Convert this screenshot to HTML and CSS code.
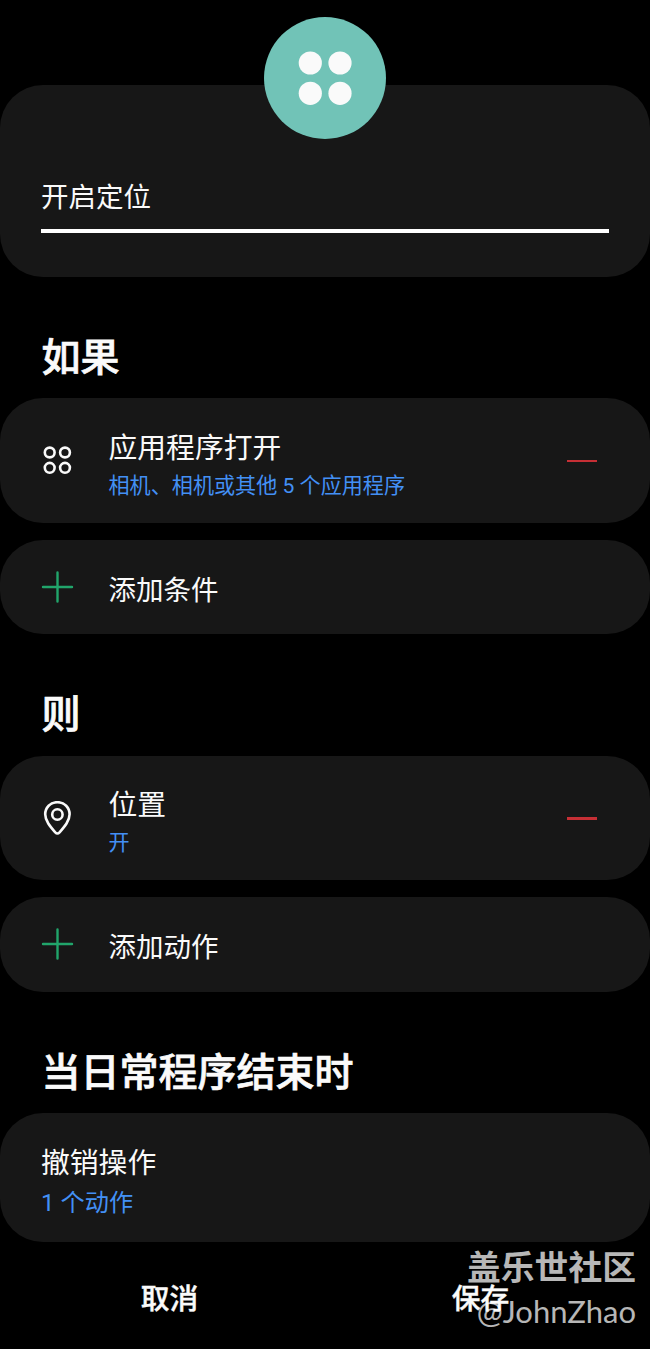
FILE: index.html
```html
<!DOCTYPE html>
<html lang="zh-CN">
  <head>
    <meta charset="UTF-8" />
    <meta name="viewport" content="width=device-width, initial-scale=1.0"/>
    <title>开启定位</title>
    <link rel="stylesheet" href="styles.css">
  </head>

  <body>
    <header class="card name-card">
      <div class="avatar">
        <svg width="122" height="122" viewBox="0 0 122 122" fill="#fafafa">
          <circle cx="46.3" cy="46" r="11.6" />
          <circle cx="76" cy="46" r="11.6" />
          <circle cx="46.3" cy="76.3" r="11.6" />
          <circle cx="76" cy="76.3" r="11.6" />
        </svg>
      </div>
      <div class="name-field">开启定位</div>
    </header>

    <section>
      <h2>如果</h2>
      <div class="card item">
        <svg class="icon" width="34" height="34" viewBox="0 0 34 34" fill="none" stroke="#fafafa" stroke-width="2.6">
          <circle cx="9.7" cy="9.5" r="4.9" />
          <circle cx="25" cy="9.5" r="4.9" />
          <circle cx="9.7" cy="24.8" r="4.9" />
          <circle cx="25" cy="24.8" r="4.9" />
        </svg>
        <div class="text">
          <p class="title">应用程序打开</p>
          <p class="sub">相机、相机或其他 5 个应用程序</p>
        </div>
        <span class="remove"></span>
      </div>
      <div class="card add">
        <svg class="icon" width="34" height="34" viewBox="0 0 34 34" stroke="#21a56b" stroke-width="2.4" stroke-linecap="round">
          <path d="M3 17H32M17.5 2.5V31.5" />
        </svg>
        <p>添加条件</p>
      </div>
    </section>

    <section>
      <h2>则</h2>
      <div class="card item">
        <svg class="icon" width="34" height="34" viewBox="0 0 34 34" fill="none" stroke="#fafafa" stroke-width="2.6">
          <path d="M17.4 1.2C10.3 1.2 5.2 6.6 5.2 13.3C5.2 19.8 10.3 25.6 15.3 31.4Q17.4 33.7 19.5 31.4C24.5 25.6 29.6 19.8 29.6 13.3C29.6 6.6 24.5 1.2 17.4 1.2Z" />
          <circle cx="17.4" cy="13.5" r="5.2" />
        </svg>
        <div class="text">
          <p class="title">位置</p>
          <p class="sub">开</p>
        </div>
        <span class="remove"></span>
      </div>
      <div class="card add">
        <svg class="icon" width="34" height="34" viewBox="0 0 34 34" stroke="#21a56b" stroke-width="2.4" stroke-linecap="round">
          <path d="M3 17H32M17.5 2.5V31.5" />
        </svg>
        <p>添加动作</p>
      </div>
    </section>

    <section>
      <h2>当日常程序结束时</h2>
      <div class="card undo">
        <p class="title">撤销操作</p>
        <p class="sub">1 个动作</p>
      </div>
    </section>

    <footer>
      <span class="action">取消</span>
      <span class="action">保存</span>
    </footer>

    <div class="watermark">
      <p class="site">盖乐世社区</p>
      <p class="user">@JohnZhao</p>
    </div>
  </body>
</html>
```

FILE: styles.css
```css
* {
  box-sizing: border-box;
}
body {
  position: relative;
  height: 1349px;
  margin: 0;
  padding-top: 85px;
  background: #000;
  color: #fafafa;
  font-family: Roboto, "Noto Sans CJK SC", sans-serif;
  overflow: hidden;
}
p {
  margin: 0;
}
h2 {
  margin: 0;
  padding: 57px 41.5px 16.5px;
  font-size: 39px;
  font-weight: 500;
  line-height: 48px;
  -webkit-text-stroke: 0.7px #fafafa;
}
.card {
  background: #171717;
  border-radius: 43px;
}
.name-card {
  position: relative;
  height: 191.5px;
  padding: 91px 41px 0;
}
.avatar {
  position: absolute;
  top: -68px;
  left: 264px;
  width: 122px;
  height: 122px;
  border-radius: 50%;
  background: #71c3b7;
}
.name-field {
  height: 57px;
  border-bottom: 4px solid #fff;
  font-size: 27.5px;
  line-height: 44px;
}
.item {
  display: flex;
  height: 124.5px;
  padding: 0 53px 0 40px;
}
.icon {
  flex: none;
  margin-right: 34.5px;
}
.item .icon {
  margin-top: 45px;
}
.item .text {
  flex: 1;
  padding-top: 28.5px;
}
.title {
  font-size: 28.8px;
  line-height: 42px;
}
.sub {
  color: #4390f5;
  font-size: 21.1px;
  line-height: 33px;
}
.remove {
  width: 30px;
  height: 2.5px;
  margin-top: 61.5px;
  background: #c62f35;
}
.add {
  display: flex;
  align-items: center;
  height: 94.5px;
  margin-top: 17px;
  padding: 0 40px;
  font-size: 27.5px;
  line-height: 40px;
}
.add p {
  padding-top: 8px;
}
.undo {
  height: 129px;
  padding: 28.5px 41px 0;
}
.undo .sub {
  font-size: 24.2px;
  line-height: 39px;
}
footer {
  display: flex;
  padding: 35px 14px 0;
}
.action {
  flex: 1;
  font-size: 28.8px;
  font-weight: 500;
  line-height: 44px;
  text-align: center;
  -webkit-text-stroke: 0.4px #fafafa;
}
.watermark {
  position: absolute;
  top: 1242px;
  right: 14px;
  color: rgba(255, 255, 255, 0.72);
  text-align: right;
}
.site {
  font-family: "Noto Sans CJK SC", sans-serif;
  font-size: 33.8px;
  font-weight: bold;
  line-height: 48px;
}
.user {
  font-family: Lato, sans-serif;
  font-size: 31px;
  line-height: 42px;
}
```
